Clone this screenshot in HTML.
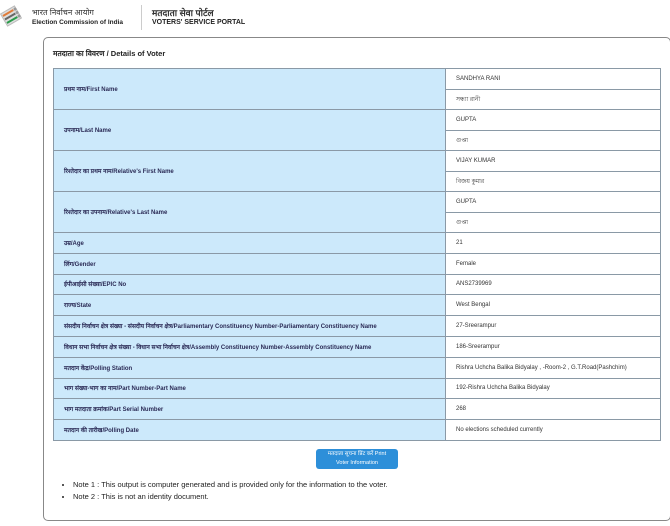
<!DOCTYPE html>
<html><head><meta charset="utf-8">
<style>
*{margin:0;padding:0;box-sizing:border-box}
body{width:670px;height:526px;background:#fff;font-family:"Liberation Sans",sans-serif;position:relative;overflow:hidden;color:#222}
.abs{position:absolute}
.card{left:43px;top:37px;width:628px;height:484px;border:1px solid #888;border-radius:5px}
table{position:absolute;left:53px;top:68px;width:607px;border-collapse:collapse;table-layout:fixed}
td{border:1px solid #8a99a6;font-size:6px;padding:0 0 0 10px;vertical-align:middle}
td.l{background:#cce9fb;font-weight:bold;color:#2a2a55;width:392px}
td.v{background:#fff;color:#333;width:215px}
tr.s td{height:20.8px}
tr.d td{height:20.5px}
.btn{left:316px;top:449px;width:82px;height:20px;background:#2d8fd9;border-radius:3px;color:#fff;font-size:5.5px;text-align:center;line-height:9px;padding-top:1px}
ul{position:absolute;left:73px;top:479px;font-size:7.5px;color:#222;line-height:12px}
</style></head><body>
<svg class="abs" style="left:0;top:4px" width="22" height="24" viewBox="0 0 22 24">
<g transform="rotate(-30 11 12)">
<rect x="3" y="5" width="16" height="14" fill="#ddd" stroke="#bbb"/>
<rect x="4" y="7" width="12" height="2" fill="#e07b39"/>
<rect x="4" y="11" width="12" height="2" fill="#666"/>
<rect x="4" y="15" width="12" height="2" fill="#2a9b4a"/>
<circle cx="18" cy="8" r="1.5" fill="#999"/><circle cx="18" cy="12" r="1.5" fill="#999"/><circle cx="18" cy="16" r="1.5" fill="#999"/>
</g></svg>
<div class="abs" style="left:32px;top:7px;font-size:8px;color:#333">भारत निर्वाचन आयोग</div>
<div class="abs" style="left:32px;top:19px;font-size:6.5px;font-weight:bold;color:#222">Election Commission of India</div>
<div class="abs" style="left:141px;top:5px;width:1px;height:25px;background:#ccc"></div>
<div class="abs" style="left:152px;top:6px;font-size:9px;font-weight:bold;color:#333">मतदाता सेवा पोर्टल</div>
<div class="abs" style="left:152px;top:19px;font-size:7px;font-weight:bold;color:#222">VOTERS' SERVICE PORTAL</div>
<div class="abs card"></div>
<div class="abs" style="left:53px;top:49px;font-size:7.5px;font-weight:bold;color:#222">मतदाता का विवरण / Details of Voter</div>
<table>
<tr class="d"><td class="l" rowspan="2">प्रथम नाम/First Name</td><td class="v">SANDHYA RANI</td></tr>
<tr class="d"><td class="v">সন্ধ্যা রানী</td></tr>
<tr class="d"><td class="l" rowspan="2">उपनाम/Last Name</td><td class="v">GUPTA</td></tr>
<tr class="d"><td class="v">গুপ্তা</td></tr>
<tr class="d"><td class="l" rowspan="2">रिश्तेदार का प्रथम नाम/Relative's First Name</td><td class="v">VIJAY KUMAR</td></tr>
<tr class="d"><td class="v">বিজয় কুমার</td></tr>
<tr class="d"><td class="l" rowspan="2">रिश्तेदार का उपनाम/Relative's Last Name</td><td class="v">GUPTA</td></tr>
<tr class="d"><td class="v">গুপ্তা</td></tr>
<tr class="s"><td class="l">उम्र/Age</td><td class="v">21</td></tr>
<tr class="s"><td class="l">लिंग/Gender</td><td class="v">Female</td></tr>
<tr class="s"><td class="l">ईपीआईसी संख्या/EPIC No</td><td class="v">ANS2739969</td></tr>
<tr class="s"><td class="l">राज्य/State</td><td class="v">West Bengal</td></tr>
<tr class="s"><td class="l">संसदीय निर्वाचन क्षेत्र संख्या - संसदीय निर्वाचन क्षेत्र/Parliamentary Constituency Number-Parliamentary Constituency Name</td><td class="v">27-Sreerampur</td></tr>
<tr class="s"><td class="l">विधान सभा निर्वाचन क्षेत्र संख्या - विधान सभा निर्वाचन क्षेत्र/Assembly Constituency Number-Assembly Constituency Name</td><td class="v">186-Sreerampur</td></tr>
<tr class="s"><td class="l">मतदान केंद्र/Polling Station</td><td class="v">Rishra Uchcha Balika Bidyalay , -Room-2 , G.T.Road(Pashchim)</td></tr>
<tr class="s"><td class="l">भाग संख्या-भाग का नाम/Part Number-Part Name</td><td class="v">192-Rishra Uchcha Balika Bidyalay</td></tr>
<tr class="s"><td class="l">भाग मतदाता क्रमांक/Part Serial Number</td><td class="v">268</td></tr>
<tr class="s"><td class="l">मतदान की तारीख/Polling Date</td><td class="v">No elections scheduled currently</td></tr>
</table>
<div class="abs btn">मतदाता सूचना प्रिंट करें Print<br>Voter Information</div>
<ul><li>Note 1 : This output is computer generated and is provided only for the information to the voter.</li><li>Note 2 : This is not an identity document.</li></ul>
</body></html>
